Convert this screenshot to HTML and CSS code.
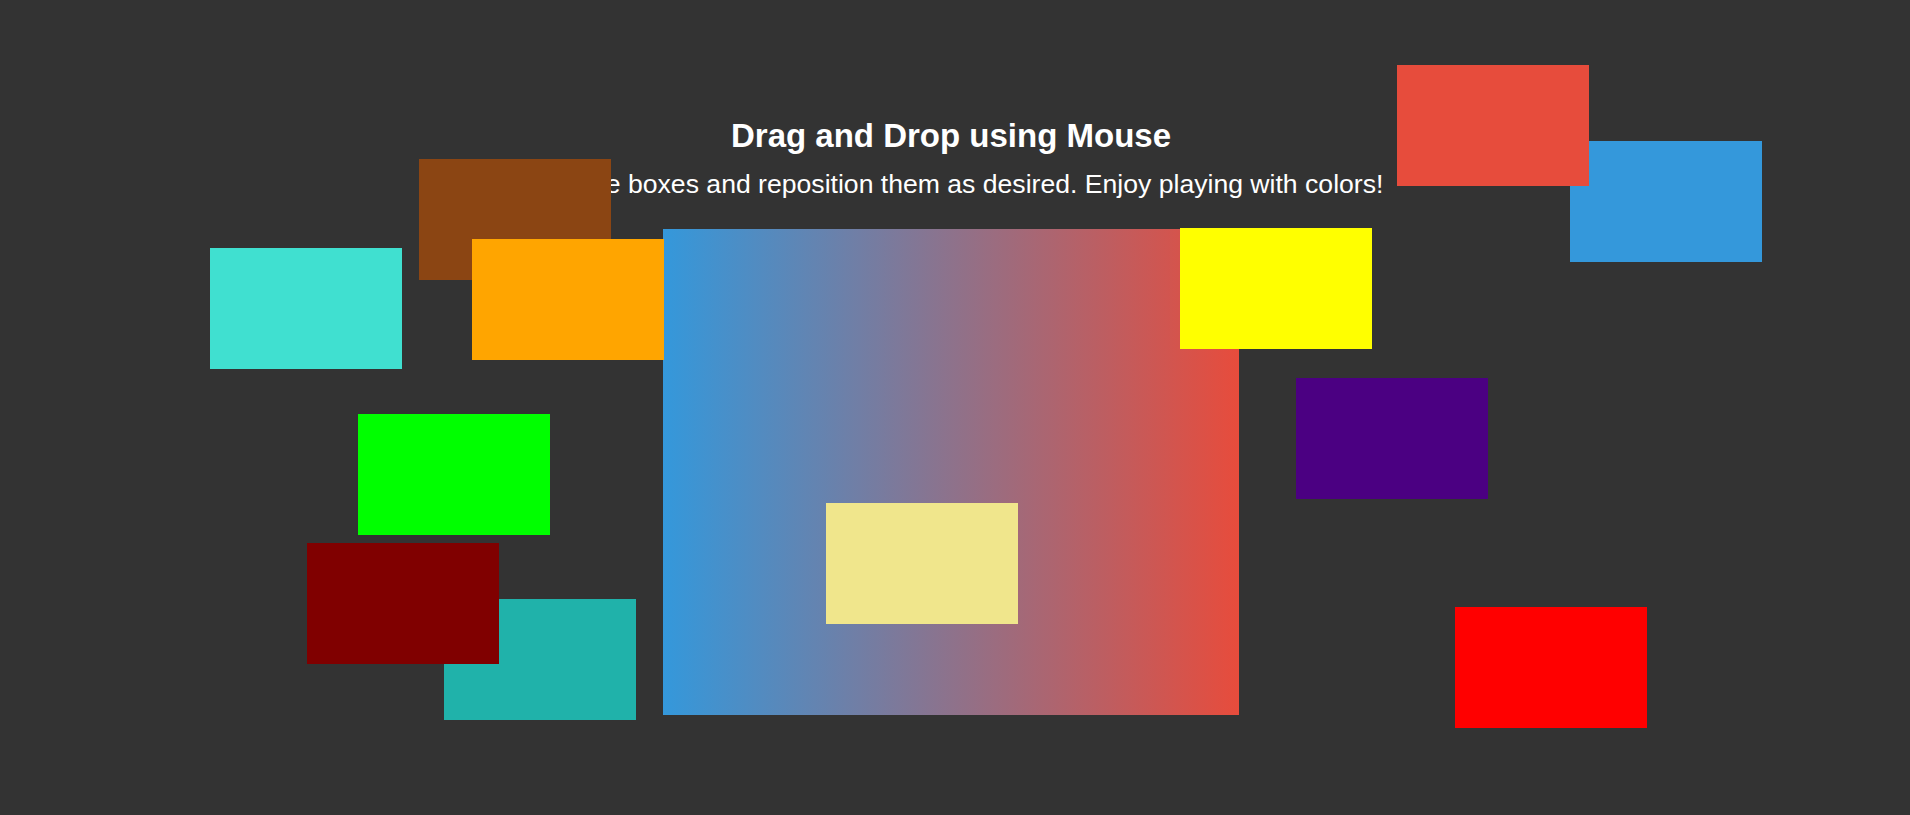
FILE: index.html
```html
<!DOCTYPE html>
<html lang="en">
<head>
<meta charset="utf-8">
<title>Drag and Drop using Mouse</title>
<link rel="stylesheet" href="styles.css">
</head>
<body>
  <main class="page">
    <header class="intro">
      <h1 class="title">Drag and Drop using Mouse</h1>
      <p class="subtitle">Drag the boxes and reposition them as desired. Enjoy playing with colors!</p>
    </header>
    <section class="dropzone"></section>
  </main>

  <div class="box box-turquoise"></div>
  <div class="box box-brown"></div>
  <div class="box box-orange"></div>
  <div class="box box-green"></div>
  <div class="box box-seagreen"></div>
  <div class="box box-maroon"></div>
  <div class="box box-khaki"></div>
  <div class="box box-yellow"></div>
  <div class="box box-blue"></div>
  <div class="box box-tomato"></div>
  <div class="box box-indigo"></div>
  <div class="box box-red"></div>
</body>
</html>
```

FILE: styles.css
```css
html, body {
  margin: 0;
  padding: 0;
  background: #333333;
  height: 100%;
  overflow: hidden;
}

body {
  position: relative;
  font-family: "Liberation Sans", Arial, sans-serif;
  color: #ffffff;
}

.page {
  display: flex;
  flex-direction: column;
  align-items: center;
  padding: 117px 8px 0 0;
}

.intro {
  display: flex;
  flex-direction: column;
  align-items: center;
}

.title {
  margin: 0;
  font-size: 33px;
  line-height: 38px;
  font-weight: bold;
}

.subtitle {
  margin: 14px 0 0;
  font-size: 26.6px;
  line-height: 30px;
}

.dropzone {
  margin-top: 30px;
  width: 576px;
  height: 486px;
  background: linear-gradient(to right, #3498db, #e74c3c);
}

.box {
  position: absolute;
  width: 192px;
  height: 121px;
}

.box-turquoise { left: 210px; top: 248px; background: #40e0d0; }
.box-brown { left: 419px; top: 159px; background: #8b4513; }
.box-orange { left: 472px; top: 239px; background: #ffa500; }
.box-green { left: 358px; top: 414px; background: #00ff00; }
.box-seagreen { left: 444px; top: 599px; background: #20b2aa; }
.box-maroon { left: 307px; top: 543px; background: #800000; }
.box-khaki { left: 826px; top: 503px; background: #f0e68c; }
.box-yellow { left: 1180px; top: 228px; background: #ffff00; }
.box-blue { left: 1570px; top: 141px; background: #3498db; }
.box-tomato { left: 1397px; top: 65px; background: #e74c3c; }
.box-indigo { left: 1296px; top: 378px; background: #4b0082; }
.box-red { left: 1455px; top: 607px; background: #ff0000; }
```
